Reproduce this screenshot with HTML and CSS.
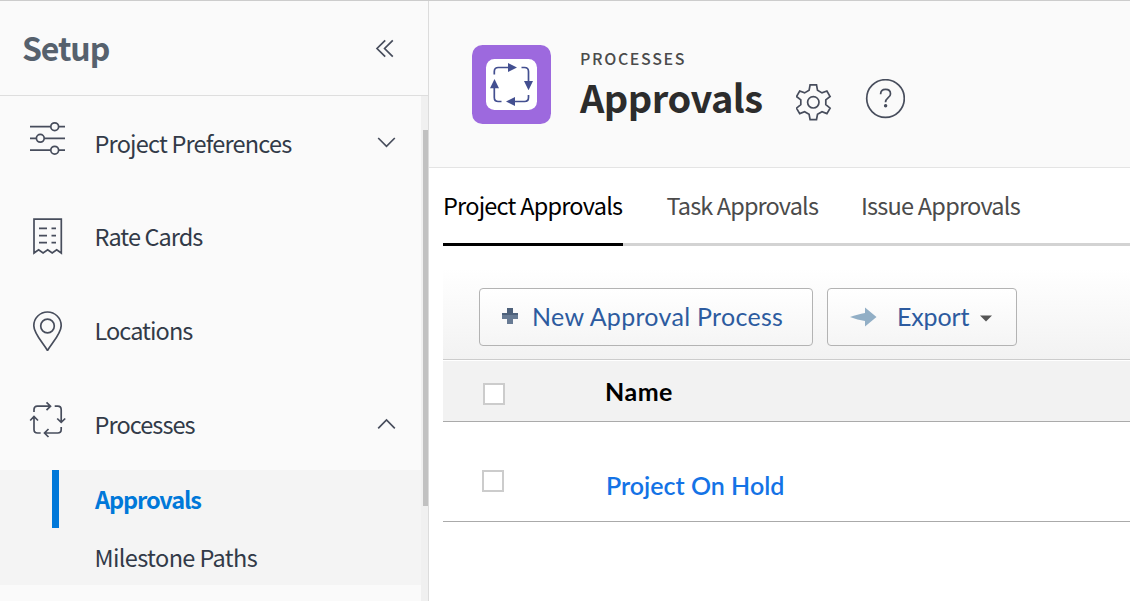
FILE: index.html
```html
<!DOCTYPE html>
<html lang="en">
<head>
<meta charset="utf-8">
<title>Setup - Approvals</title>
<link rel="stylesheet" href="styles.css">
</head>
<body>
<div class="app">
  <aside class="sidebar">
    <header class="side-head">
      <h2 class="side-title"><span>Setup</span></h2>
      <svg class="collapse" width="20" height="20" viewBox="0 0 20 20"><path d="M10.2 2.300 2 10.500l8.200 8.200M17.800 2.300 9.600 10.500l8.200 8.200"/></svg>
    </header>
    <div class="side-body">
      <nav class="nav">
        <a class="item">
          <svg class="ico" width="40" height="48" viewBox="0 0 40 48"><path d="M2 10.7h20.7M30.7 10.7H37M2 22.3h6.3M16.3 22.3H37M2 34.2h20.7M30.7 34.2H37"/><circle cx="26.7" cy="10.7" r="3.9"/><circle cx="12.3" cy="22.3" r="3.9"/><circle cx="26.7" cy="34.2" r="3.9"/></svg>
          <span class="label">Project Preferences</span>
          <svg class="chev" width="20" height="12" viewBox="0 0 20 12"><path d="m2.2 2 8.3 8.3L18.8 2"/></svg>
        </a>
        <a class="item tall">
          <svg class="ico" width="40" height="48" viewBox="0 0 40 48"><path d="M6 44V10.2h27.3V44l-4.6-3.2-4.5 3.2-4.5-3.2-4.6 3.2-4.5-3.2zM11 19.3h8M23.5 19.3H28M11 26.6h8M23.5 26.6H28M11 33.7h8M23.5 33.7H28"/></svg>
          <span class="label short">Rate Cards</span>
        </a>
        <a class="item">
          <svg class="ico" width="40" height="48" viewBox="0 0 40 48"><path d="M19.5 47.5C15 40 5.8 30.5 5.8 22.7a13.7 13.7 0 0 1 27.4 0C33.2 30.5 24 40 19.5 47.5z"/><circle cx="19.5" cy="23" r="6.8"/></svg>
          <span class="label short">Locations</span>
        </a>
        <a class="item tall">
          <svg class="ico" width="40" height="48" viewBox="0 0 40 48"><path d="M6 16v-2.500q0-3.300 3.300-3.300h13M18.500 6.300l4 3.900-4 3.900M26.700 10.200h3q3.500 0 3.500 3.500v12.500M29.200 22.500l4 3.900 4-3.900M33.200 31v2.500q0 3.500-3.500 3.500H16.500M20.500 33l-4 4 4 4M12.700 37H9.500Q6 37 6 33.500V20.800M2.200 24.500 6 20.500l4 4"/></svg>
          <span class="label short expanded">Processes</span>
          <svg class="chev up" width="20" height="12" viewBox="0 0 20 12"><path d="m2.200 10.300 8.300-8.300 8.300 8.300"/></svg>
        </a>
        <div class="sub">
          <a class="sub-item active"><span>Approvals</span></a>
          <a class="sub-item"><span>Milestone Paths</span></a>
        </div>
      </nav>
      <div class="track"><div class="thumb"></div></div>
    </div>
  </aside>
  <main class="main">
    <header class="page-head">
      <svg class="badge" width="79" height="79" viewBox="0 0 79 79"><rect width="79" height="79" rx="10.5" fill="#9d69de"/><rect x="14" y="14" width="51" height="51" rx="8.5" fill="#fff"/><g fill="none" stroke="#434f90" stroke-width="1.7"><path d="M22.300 29.500v-3q0-4 4-4H37M49.500 22.500h3q4 0 4 4V38M56.500 50v2.500q0 4-4 4H43M29.500 56.500h-3.200q-4 0-4-4V42"/></g><path fill="#434f90" d="m36 18 9 4.500-9 4.500zM52 36h9l-4.500 9.300zM43 52v9l-9-4.500zM18 43.300h9L22.500 34z"/></svg>
      <div class="titles">
        <div class="eyebrow"><span>PROCESSES</span></div>
        <h1 class="title"><span>Approvals</span></h1>
      </div>
      <svg class="gear" width="36" height="38" viewBox="-17.300 -18.300 36 38"><path d="M-3.200-17.400H3.200L4.200-12 8.700-9.400 13.600-11.300 16.800-5.800 12.500-2.400V2.400L16.800 5.800 13.600 11.300 8.700 9.400 4.200 12 3.200 17.400H-3.200L-4.200 12-8.700 9.400-13.600 11.300-16.800 5.800-12.500 2.400V-2.400L-16.800-5.800-13.600-11.300-8.700-9.400-4.200-12z"/><circle r="5.700"/></svg>
      <svg class="help" width="40" height="40" viewBox="0 0 40 40"><circle cx="20.500" cy="19.500" r="18.800"/><path d="M15.600 15.300c0-3.100 2.200-4.900 5-4.900s4.900 1.700 4.900 4.500c0 3.700-5 3.800-5 8.300"/><circle cx="20.600" cy="26.700" r=".9" class="dot"/></svg>
    </header>
    <section class="content">
      <nav class="tabs">
        <a class="tab current"><span>Project Approvals</span></a>
        <a class="tab"><span>Task Approvals</span></a>
        <a class="tab"><span>Issue Approvals</span></a>
      </nav>
      <div class="toolbar">
        <button class="btn new"><svg width="16" height="16" viewBox="0 0 16 16"><path fill="#687b94" d="M5 0h6v16H5z"/><path fill="#687b94" d="M0 5h16v6H0z"/><path fill="#4e617b" d="M5 0h6v5h5v2H0V5h5z"/></svg><span class="b1">New Approval Process</span></button>
        <button class="btn export"><svg width="28" height="20" viewBox="0 0 28 20"><path fill="#92afc6" d="M0 10c5-2 10-3 15-4V.5L26.500 10 15 19.500V14C10 13 5 12 0 10z"/></svg><span class="b2">Export</span><svg class="caret" width="12" height="7" viewBox="0 0 12 7"><path fill="#555" d="M0 .5h12L6 6.500z"/></svg></button>
      </div>
      <div class="row head"><i class="box"></i><span class="name">Name</span></div>
      <div class="row"><i class="box"></i><a class="link">Project On Hold</a></div>
    </section>
  </main>
</div>
</body>
</html>
```
FILE: styles.css
```css
* { box-sizing: border-box; }
body { margin: 0; background: #fff; font-family: "Noto Sans CJK SC", "Noto Sans", sans-serif; color: #323a48; }
h1, h2 { margin: 0; }
span, a { white-space: nowrap; }
.app { display: flex; width: 1130px; height: 601px; overflow: hidden; border-top: 1px solid #ccc; }
.sidebar { flex: none; width: 429px; border-right: 1px solid #dcdcdc; background: #fafafa; display: flex; flex-direction: column; }
.side-head { height: 95px; flex: none; border-bottom: 1px solid #dedede; display: flex; justify-content: space-between; align-items: center; padding: 0 33px 0 22px; }
.side-title { font-size: 32px; line-height: 40px; font-weight: 700; letter-spacing: -1.1px; padding-bottom: 2px; color: #56616d; }
.side-head svg, .ico, .chev, .gear, .help { fill: none; stroke: #474d5c; stroke-width: 1.7; }
.side-body { flex: 1; display: flex; min-height: 0; }
.nav { width: 421px; }
.item { display: flex; height: 93px; padding: 20px 25px 0 28px; }
.tall { height: 94px; }
.ico { margin-right: 26.5px; flex: none; }
.label { font-size: 23.5px; line-height: 54px; letter-spacing: -.8px; }
.short { letter-spacing: -.92px; }
.expanded { line-height: 56px; }
.chev { margin: 20px 0 0 auto; }
.up { margin-top: 22px; }
.sub { background: #f4f4f4; height: 115px; }
.sub-item { display: flex; align-items: center; height: 58px; padding-left: 94.5px; font-size: 23.5px; line-height: 58px; letter-spacing: -.62px; }
.active { color: #0078d9; font-weight: 700; margin-left: 52px; padding-left: 36px; border-left: 7px solid #0078d9; letter-spacing: -1.1px; }
.track { width: 7px; background: #f0f0f0; padding: 34px 0 0 2px; }
.thumb { height: 376px; background: #c1c1c1; }
.main { flex: 1; min-width: 0; }
.page-head { height: 167px; background: #fafafa; border-bottom: 1px solid #e4e4e4; display: flex; padding: 44px 0 0 43px; }
.badge { flex: none; }
.titles { margin: -1px 0 0 29px; width: 216px; }
.eyebrow { font-size: 16px; line-height: 28px; font-weight: 500; letter-spacing: 1.65px; color: #4b4b4b; }
.title { font-size: 38px; line-height: 50px; font-weight: 700; letter-spacing: -.5px; color: #2c2c2c; }
.gear { margin-top: 39px; }
.help { margin: 34px 0 0 33px; }
.help .dot { fill: #474d5c; }
.content { padding-left: 14px; }
.tabs { display: flex; gap: 43.5px; height: 78px; border-bottom: 3px solid #d3d3d3; font-size: 23.5px; line-height: 74px; letter-spacing: -.77px; color: #4b4b4b; }
.tab { height: 78px; }
.current { color: #000; width: 180px; border-bottom: 3px solid #000; }
.tab:nth-child(2) { width: 151px; letter-spacing: -.87px; }
.toolbar { height: 114px; padding: 42px 0 0 36px; display: flex; gap: 14px; background: linear-gradient(#fff 20%, #f2f2f2); border-bottom: 1px solid #ccc; }
.btn { height: 58px; border: 1px solid #b3b3b3; border-radius: 4px; padding: 0 0 2px 22px; display: flex; align-items: center; background: linear-gradient(#fff, #f5f5f5); color: #2d5b9f; font: 25px/54px Lato, sans-serif; }
.new { width: 334px; }
.new svg { margin-right: 14px; }
.b1 { letter-spacing: .3px; }
.export { width: 190px; }
.export svg { margin-right: 19px; margin-top: 2px; }
.b2 { letter-spacing: -.15px; }
.export .caret { margin: 5px 0 0 11px; }
.row { display: flex; align-items: center; height: 100px; border-bottom: 1px solid #aaa; padding-left: 39px; font-family: Lato, sans-serif; font-size: 25px; }
.head { height: 62px; background: #f2f2f2; border-top: 1px solid #fff; padding-left: 40px; color: #000; font-weight: 700; }
.name { letter-spacing: .5px; margin-left: -1px; }
.box { width: 22px; height: 22px; border: 2px solid #ccc; background: #fff; margin: 6px 101px 0 0; }
.row:last-child .box { margin: 19px 102px 0 0; }
.link { color: #1473e6; font-weight: 600; padding-top: 26px; }
```
